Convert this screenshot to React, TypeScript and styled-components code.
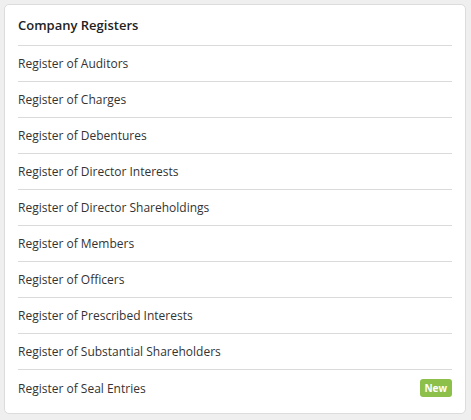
import React from "react";
import styled, { createGlobalStyle } from "styled-components";

const GlobalStyle = createGlobalStyle`
  body {
    margin: 0;
    background: #efefef;
    font-family: "Open Sans", "Liberation Sans", sans-serif;
  }
`;

const Page = styled.div`
  padding: 4px 5px 6px 4px;
`;

const Card = styled.div`
  background: #fff;
  border: 1px solid #dcdcdc;
  border-radius: 5px;
  padding: 0 13px 7px;
`;

const Title = styled.div`
  height: 41px;
  display: flex;
  align-items: center;
  font-size: 13px;
  font-weight: 600;
  color: #222;
  border-bottom: 1px solid #dadada;
  box-sizing: border-box;
`;

const Row = styled.div<{ $last?: boolean }>`
  height: 36px;
  display: flex;
  align-items: center;
  justify-content: space-between;
  font-size: 12px;
  color: #333;
  box-sizing: border-box;
  border-bottom: ${(p) => (p.$last ? "none" : "1px solid #dadada")};
`;

const Badge = styled.span`
  background: #8dc04a;
  color: #fff;
  font-size: 10px;
  font-weight: 700;
  padding: 2px 5px 2px 4px;
  border-radius: 3px;
  line-height: 14px;
`;

const registers = [
  "Register of Auditors",
  "Register of Charges",
  "Register of Debentures",
  "Register of Director Interests",
  "Register of Director Shareholdings",
  "Register of Members",
  "Register of Officers",
  "Register of Prescribed Interests",
  "Register of Substantial Shareholders",
  "Register of Seal Entries",
];

export default function App() {
  return (
    <>
      <GlobalStyle />
      <Page>
        <Card>
          <Title>Company Registers</Title>
          {registers.map((name, i) => {
            const last = i === registers.length - 1;
            return (
              <Row key={name} $last={last}>
                <span>{name}</span>
                {last && <Badge>New</Badge>}
              </Row>
            );
          })}
        </Card>
      </Page>
    </>
  );
}
